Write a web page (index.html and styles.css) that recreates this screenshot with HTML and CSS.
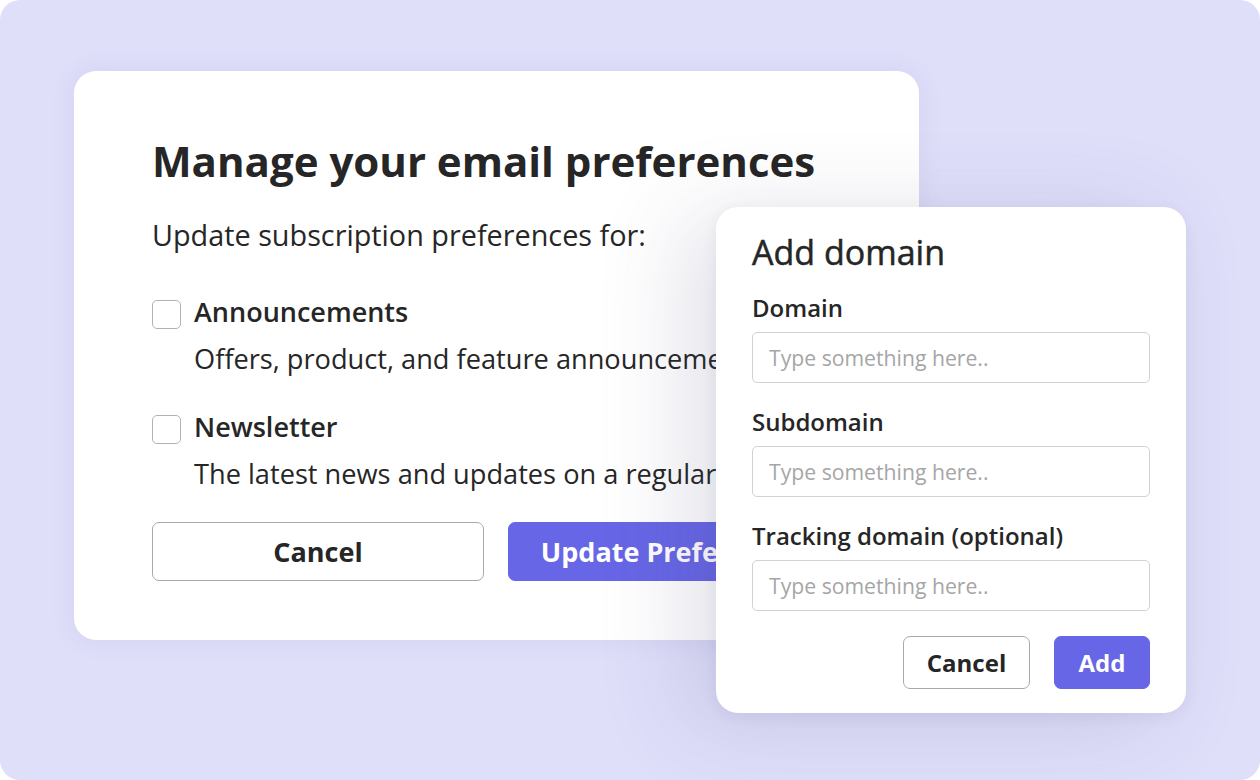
FILE: index.html
```html
<!DOCTYPE html>
<html lang="en">
<head>
<meta charset="utf-8">
<title>Email preferences</title>
<link rel="stylesheet" href="styles.css">
</head>
<body>
<div class="stage">
  <section class="card prefs">
    <h1 class="prefs-title">Manage your email preferences</h1>
    <p class="prefs-sub">Update subscription preferences for:</p>
    <div class="option option-first">
      <div class="option-head"><span class="checkbox"></span><span class="option-name">Announcements</span></div>
      <p class="option-desc">Offers, product, and feature announcements</p>
    </div>
    <div class="option">
      <div class="option-head"><span class="checkbox"></span><span class="option-name">Newsletter</span></div>
      <p class="option-desc">The latest news and updates on a regular basis</p>
    </div>
    <div class="prefs-actions">
      <button class="btn btn-outline btn-lg">Cancel</button>
      <button class="btn btn-primary btn-lg">Update Preferences</button>
    </div>
  </section>

  <section class="card domain">
    <h2 class="domain-title">Add domain</h2>
    <label class="field field-first">
      <span class="field-label">Domain</span>
      <input class="field-input" type="text" placeholder="Type something here..">
    </label>
    <label class="field">
      <span class="field-label">Subdomain</span>
      <input class="field-input" type="text" placeholder="Type something here..">
    </label>
    <label class="field">
      <span class="field-label">Tracking domain (optional)</span>
      <input class="field-input" type="text" placeholder="Type something here..">
    </label>
    <div class="domain-actions">
      <button class="btn btn-outline btn-sm btn-cancel">Cancel</button>
      <button class="btn btn-primary btn-sm btn-add">Add</button>
    </div>
  </section>
</div>
</body>
</html>
```

FILE: styles.css
```css
* { box-sizing: border-box; }
html, body { margin: 0; padding: 0; background: #ffffff; }
body {
  font-family: "Open Sans", "Noto Sans", sans-serif;
  color: #262626;
  width: 1260px;
  height: 780px;
  overflow: hidden;
}
.stage {
  position: relative;
  width: 1260px;
  height: 780px;
  background: #e0dffa;
  border-radius: 20px;
  padding: 71px 0 0 74px;
}
.card {
  background: #ffffff;
  border-radius: 22px;
}
.prefs {
  width: 845px;
  height: 569px;
  padding: 65px 0 0 78px;
  box-shadow: 0 0 24px rgba(90, 90, 150, 0.10);
}
.prefs-title {
  margin: 0;
  font-size: 42px;
  line-height: 50px;
  font-weight: 700;
}
.prefs-sub {
  margin: 29px 0 0;
  font-size: 28.8px;
  line-height: 40px;
  font-weight: 400;
}
.option { margin-top: 30px; }
.option-first { margin-top: 39px; }
.option-head {
  display: flex;
  align-items: flex-start;
  gap: 13px;
}
.checkbox {
  width: 29px;
  height: 29px;
  margin-top: 6px;
  border: 1.5px solid #b3b3b3;
  border-radius: 5px;
  background: #fff;
  flex: none;
}
.option-name {
  font-size: 27px;
  line-height: 36px;
  font-weight: 600;
}
.option-desc {
  margin: 9px 0 0 42px;
  font-size: 27.2px;
  line-height: 40px;
  white-space: nowrap;
}
.prefs-actions {
  display: flex;
  gap: 24px;
  margin-top: 28px;
}
.btn {
  font-family: inherit;
  font-weight: 700;
  border-radius: 7px;
  cursor: pointer;
  padding: 0;
  display: flex;
  align-items: center;
  justify-content: center;
  flex: none;
}
.btn-outline {
  background: #ffffff;
  color: #262626;
  border: 1.5px solid #a9a9a9;
}
.btn-primary {
  background: #6766e6;
  color: #ffffff;
  border: 1.5px solid #6766e6;
}
.btn-lg {
  width: 332px;
  height: 59px;
  font-size: 27px;
}
.domain {
  position: absolute;
  left: 716px;
  top: 207px;
  width: 470px;
  height: 506px;
  padding: 23px 36px 0 36px;
  box-shadow: -30px 10px 90px rgba(70, 70, 120, 0.16), 0 4px 14px rgba(70, 70, 120, 0.08);
}
.domain-title {
  margin: 0;
  font-size: 34px;
  line-height: 44px;
  font-weight: 500;
  -webkit-text-stroke: 0.5px currentColor;
}
.field {
  display: block;
  margin-top: 23px;
}
.field-first { margin-top: 18px; }
.field-label {
  display: block;
  font-size: 24px;
  line-height: 32px;
  font-weight: 600;
}
.field-input {
  display: block;
  width: 398px;
  height: 51px;
  margin-top: 8px;
  border: 1.5px solid #d2d2d2;
  border-radius: 5px;
  padding: 0 16px;
  font-family: inherit;
  font-size: 21.2px;
  color: #262626;
  background: #fff;
  outline: none;
}
.field-input::placeholder { color: #a6a6a6; }
.domain-actions {
  display: flex;
  justify-content: flex-end;
  gap: 24px;
  margin-top: 25px;
  width: 398px;
}
.btn-sm {
  height: 53px;
  font-size: 24px;
}
.btn-cancel { width: 127px; }
.btn-add { width: 96px; }
```
